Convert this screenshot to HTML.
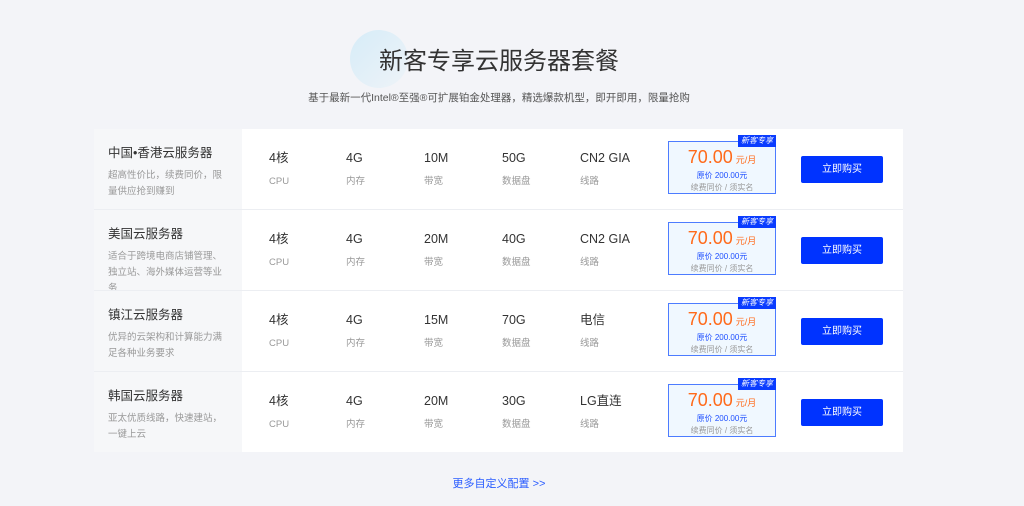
<!DOCTYPE html>
<html><head><meta charset="utf-8"><style>
*{margin:0;padding:0;box-sizing:border-box}
body{width:1024px;height:506px;background:#f3f4f8;font-family:"Liberation Sans","Noto Sans CJK SC",sans-serif;position:relative;overflow:hidden;color:#333}
.circle{position:absolute;left:350px;top:30px;width:58px;height:58px;border-radius:50%;background:linear-gradient(135deg,#d6ecf8,#eef3f8)}
h1{position:absolute;left:0;width:998px;top:46px;text-align:center;font-weight:400;font-size:24px;line-height:32px;color:#333}
.sub{position:absolute;left:0;width:998px;top:90px;text-align:center;font-size:10.5px;line-height:16px;color:#555}
.tbl{position:absolute;left:94px;top:129px;width:809px;background:#fff}
.row{position:relative;height:81px;border-bottom:1px solid #eceef2}
.row:last-child{height:80px;border-bottom:none}
.left{position:absolute;left:0;top:0;width:148px;height:100%;background:#f6f7f9;padding:15px 14px 0 14px;overflow:hidden}
.left b{display:block;font-weight:400;font-size:12.5px;line-height:18px;color:#333;margin-bottom:6px}
.left p{font-size:9.5px;color:#999;line-height:16px}
.c{position:absolute;top:21px}
.c .v{font-size:12.5px;line-height:16px;height:16px;color:#333}
.c .l{font-size:9.5px;line-height:14px;color:#999;margin-top:9px}
.price{position:absolute;left:574px;top:12px;width:108px;height:53px;border:1px solid #4d7cff;background:#f0f8ff;text-align:center}
.price .p{font-size:18px;color:#ff6a1a;margin-top:5px;line-height:20px}
.price .p small{font-size:9px;margin-left:3px}
.price .o{font-size:8px;color:#1e4fff;line-height:12px}
.price .n{font-size:8px;color:#999;line-height:12px}
.badge{position:absolute;right:-1px;top:-7px;background:#0a3cff;color:#fff;font-size:8px;font-style:italic;padding:1px 3px;line-height:10px}
.btn{position:absolute;left:707px;top:27px;width:82px;height:27px;background:#0033ff;color:#fff;font-size:10px;text-align:center;line-height:27px;border-radius:2px}
.more{position:absolute;left:0;width:998px;top:477px;text-align:center;font-size:11px;line-height:14px;color:#2a5cff}
</style></head><body>
<div class="circle"></div>
<h1>新客专享云服务器套餐</h1>
<div class="sub">基于最新一代Intel®至强®可扩展铂金处理器，精选爆款机型，即开即用，限量抢购</div>
<div class="tbl">
<div class="row"><div class="left"><b>中国•香港云服务器</b><p>超高性价比，续费同价，限量供应抢到赚到</p></div>
<div class="c" style="left:175px"><div class="v">4核</div><div class="l">CPU</div></div>
<div class="c" style="left:252px"><div class="v">4G</div><div class="l">内存</div></div>
<div class="c" style="left:330px"><div class="v">10M</div><div class="l">带宽</div></div>
<div class="c" style="left:408px"><div class="v">50G</div><div class="l">数据盘</div></div>
<div class="c" style="left:486px"><div class="v">CN2 GIA</div><div class="l">线路</div></div>
<div class="price"><div class="badge">新客专享</div><div class="p">70.00<small>元/月</small></div><div class="o">原价 200.00元</div><div class="n">续费同价 / 须实名</div></div>
<div class="btn">立即购买</div></div>
<div class="row"><div class="left"><b>美国云服务器</b><p>适合于跨境电商店铺管理、独立站、海外媒体运营等业务</p></div>
<div class="c" style="left:175px"><div class="v">4核</div><div class="l">CPU</div></div>
<div class="c" style="left:252px"><div class="v">4G</div><div class="l">内存</div></div>
<div class="c" style="left:330px"><div class="v">20M</div><div class="l">带宽</div></div>
<div class="c" style="left:408px"><div class="v">40G</div><div class="l">数据盘</div></div>
<div class="c" style="left:486px"><div class="v">CN2 GIA</div><div class="l">线路</div></div>
<div class="price"><div class="badge">新客专享</div><div class="p">70.00<small>元/月</small></div><div class="o">原价 200.00元</div><div class="n">续费同价 / 须实名</div></div>
<div class="btn">立即购买</div></div>
<div class="row"><div class="left"><b>镇江云服务器</b><p>优异的云架构和计算能力满足各种业务要求</p></div>
<div class="c" style="left:175px"><div class="v">4核</div><div class="l">CPU</div></div>
<div class="c" style="left:252px"><div class="v">4G</div><div class="l">内存</div></div>
<div class="c" style="left:330px"><div class="v">15M</div><div class="l">带宽</div></div>
<div class="c" style="left:408px"><div class="v">70G</div><div class="l">数据盘</div></div>
<div class="c" style="left:486px"><div class="v">电信</div><div class="l">线路</div></div>
<div class="price"><div class="badge">新客专享</div><div class="p">70.00<small>元/月</small></div><div class="o">原价 200.00元</div><div class="n">续费同价 / 须实名</div></div>
<div class="btn">立即购买</div></div>
<div class="row"><div class="left"><b>韩国云服务器</b><p>亚太优质线路，快速建站，一键上云</p></div>
<div class="c" style="left:175px"><div class="v">4核</div><div class="l">CPU</div></div>
<div class="c" style="left:252px"><div class="v">4G</div><div class="l">内存</div></div>
<div class="c" style="left:330px"><div class="v">20M</div><div class="l">带宽</div></div>
<div class="c" style="left:408px"><div class="v">30G</div><div class="l">数据盘</div></div>
<div class="c" style="left:486px"><div class="v">LG直连</div><div class="l">线路</div></div>
<div class="price"><div class="badge">新客专享</div><div class="p">70.00<small>元/月</small></div><div class="o">原价 200.00元</div><div class="n">续费同价 / 须实名</div></div>
<div class="btn">立即购买</div></div>
</div>
<div class="more">更多自定义配置 &gt;&gt;</div>
</body></html>
